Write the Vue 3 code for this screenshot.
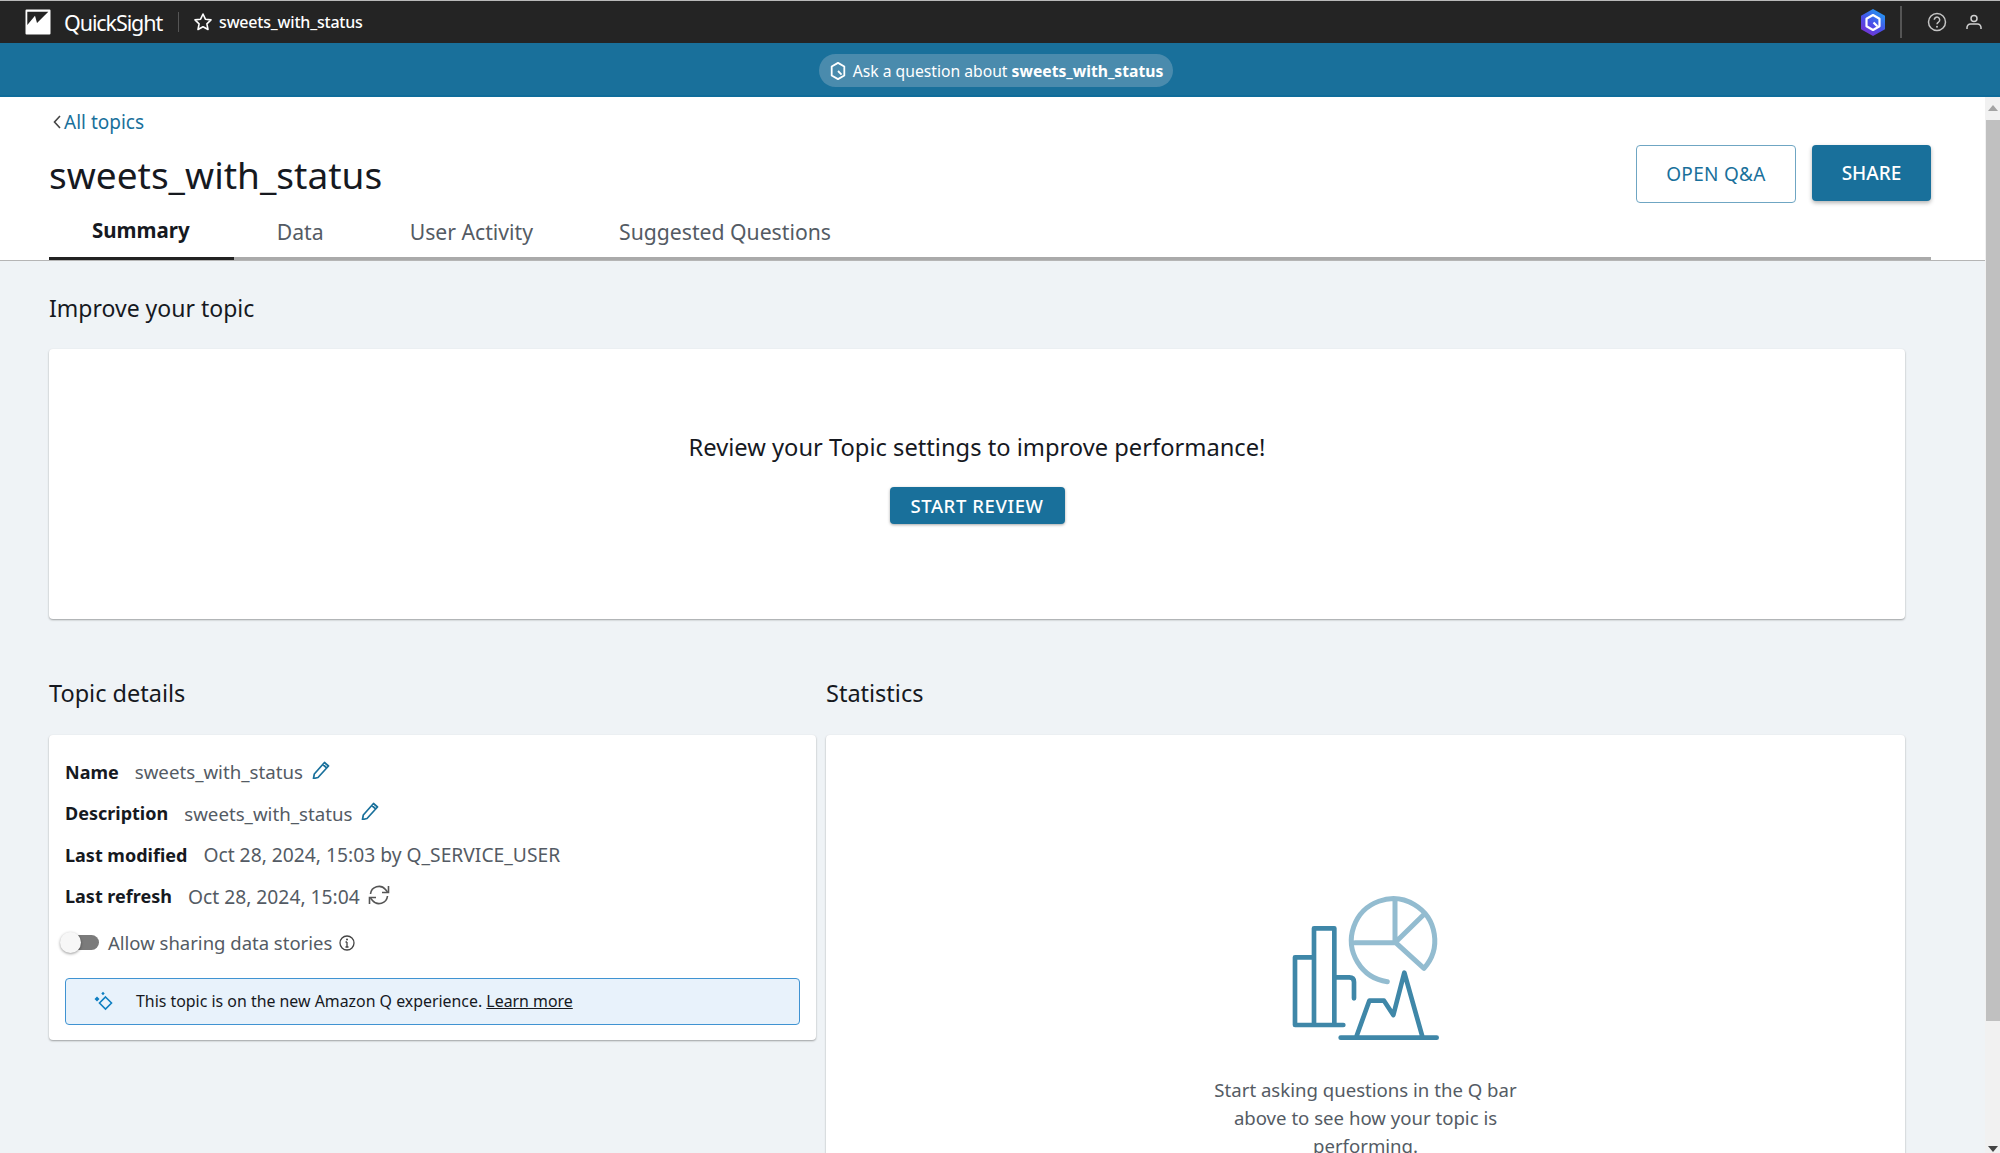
<template>
  <div class="page">
    <header class="topbar">
      <div class="brand">
        <svg class="logo" viewBox="0 0 26 26">
          <path d="M1.500 0.500h23a1 1 0 0 1 1 1v23a1 1 0 0 1-1 1h-23a1 1 0 0 1-1-1v-23a1 1 0 0 1 1-1z" fill="#fff" />
          <path d="M2.300 2.700H23.300L12 14 10 6.700 2.300 16z" fill="#232323" />
        </svg>
        <span class="brand-name">QuickSight</span>
      </div>
      <span class="bar-sep"></span>
      <svg class="star" viewBox="0 0 20 20">
        <path d="M10 2l2.400 5.200 5.600.7-4.100 3.900 1.100 5.700-5-2.800-5 2.800 1.100-5.700L2 7.900l5.600-.7z" fill="none" stroke="#fff" stroke-width="1.600" stroke-linejoin="round" />
      </svg>
      <span class="topic-name">sweets_with_status</span>
      <div class="bar-right">
        <svg class="q-logo" viewBox="0 0 24 27">
          <defs>
            <linearGradient id="qGrad" x1="0.8" y1="0" x2="0.2" y2="1">
              <stop offset="0" stop-color="#1f9df2" />
              <stop offset="0.55" stop-color="#4a4fe8" />
              <stop offset="1" stop-color="#7a2fd0" />
            </linearGradient>
          </defs>
          <path d="M12 0l12 6.700v13.600L12 27 0 20.300V6.700z" fill="url(#qGrad)" />
          <path d="M12 6l6.500 3.700v7.600L12 21l-6.500-3.700V9.700z" fill="none" stroke="#fff" stroke-width="2.200" stroke-linejoin="round" />
          <path d="M12.500 13.500l3.800 3.800" stroke="#fff" stroke-width="2.200" />
        </svg>
        <span class="right-sep"></span>
        <svg class="help" viewBox="0 0 20 20">
          <circle cx="10" cy="10" r="8.500" fill="none" stroke="#c4c4c4" stroke-width="1.500" />
          <path d="M7.300 7.800a2.700 2.700 0 1 1 4.300 2.200c-1 .7-1.600 1.100-1.600 2.200" fill="none" stroke="#c4c4c4" stroke-width="1.500" />
          <circle cx="10" cy="14.700" r="1" fill="#c4c4c4" />
        </svg>
        <svg class="person" viewBox="0 0 16 16">
          <circle cx="8" cy="4.500" r="3" fill="none" stroke="#d0d0d0" stroke-width="1.500" />
          <path d="M1 15v-1.500a3.500 3.500 0 0 1 3.500-3.500h7a3.500 3.500 0 0 1 3.500 3.500V15" fill="none" stroke="#d0d0d0" stroke-width="1.500" />
        </svg>
      </div>
    </header>

    <div class="qbar">
      <div class="ask-pill">
        <svg class="ask-icon" viewBox="0 0 20 22">
          <path d="M10 2l7 4v10l-7 4-7-4V6z" fill="none" stroke="#fff" stroke-width="2" stroke-linejoin="round" />
          <path d="M10 11l4 4" stroke="#fff" stroke-width="2" />
        </svg>
        <span>Ask a question about <b>sweets_with_status</b></span>
      </div>
    </div>

    <div class="body-wrap">
      <main class="main">
        <section class="head">
          <a class="back"><svg class="chev" viewBox="0 0 8 14"><path d="M7 1L1.500 7 7 13" fill="none" stroke="#444" stroke-width="1.600" /></svg>All topics</a>
          <div class="title-row">
            <h1>sweets_with_status</h1>
            <div class="actions">
              <button class="btn-outline">OPEN Q&amp;A</button>
              <button class="btn-solid">SHARE</button>
            </div>
          </div>
          <nav class="tabs">
            <a v-for="t in tabs" :key="t" class="tab" :class="{ active: t === 'Summary' }">{{ t }}</a>
          </nav>
        </section>

        <section class="content">
          <h2 class="improve-title">Improve your topic</h2>
          <div class="card review-card">
            <p>Review your Topic settings to improve performance!</p>
            <button class="btn-review">START REVIEW</button>
          </div>

          <div class="columns">
            <div class="col-left">
              <h2>Topic details</h2>
              <div class="card details-card">
                <div v-for="r in rows" :key="r.label" class="detail-row" :class="{ editable: r.edit }">
                  <strong>{{ r.label }}</strong>
                  <span>{{ r.value }}</span>
                  <svg v-if="r.edit" class="pencil" viewBox="0 0 18 18">
                    <path d="M12.500 1.500l4 3.500L6 16.500l-4.500 1 .8-4.500zM10.800 3.500l4 3.500" fill="none" stroke="#19709b" stroke-width="1.700" stroke-linejoin="round" />
                  </svg>
                  <svg v-if="r.refresh" class="refresh" viewBox="0 0 24 22">
                    <path d="M3.500 10a8.500 8.500 0 0 1 15-4.500L20.500 8" fill="none" stroke="#555" stroke-width="1.600" />
                    <path d="M21.500 2v6.500H15" fill="none" stroke="#555" stroke-width="1.600" />
                    <path d="M20.500 12a8.500 8.500 0 0 1-15 4.500L3.500 14" fill="none" stroke="#555" stroke-width="1.600" />
                    <path d="M2.500 20v-6.500H9" fill="none" stroke="#555" stroke-width="1.600" />
                  </svg>
                </div>
                <div class="toggle-row">
                  <span class="toggle"><i></i></span>
                  <span>Allow sharing data stories</span>
                  <svg class="info" viewBox="0 0 16 16">
                    <circle cx="8" cy="8" r="7" fill="none" stroke="#444" stroke-width="1.300" />
                    <path d="M8 7v5M6.500 12h3M6.500 7H8" fill="none" stroke="#444" stroke-width="1.300" />
                    <circle cx="8" cy="4.500" r="1" fill="#444" />
                  </svg>
                </div>
                <div class="banner">
                  <svg class="spark" viewBox="0 0 20 20">
                    <path d="M11.500 6l6 6-6 6-6-6z" fill="none" stroke="#0f7fc2" stroke-width="1.600" />
                    <path d="M3 5.500l2.500 2.500L3 10.500.5 8zM9 .8l1.700 1.700L9 4.200 7.300 2.500z" fill="#0f7fc2" />
                  </svg>
                  <span>This topic is on the new Amazon Q experience. <a>Learn more</a></span>
                </div>
              </div>
            </div>

            <div class="col-right">
              <h2>Statistics</h2>
              <div class="card stats-card">
                <svg class="illus" viewBox="0 0 660 570">
                  <g fill="none" stroke="#93bcd0" stroke-width="15" stroke-linecap="round" stroke-linejoin="round">
                    <path d="M412 335A125 125 0 1 1 522 295L437 218M315 218H437M435 90V218L520 135" />
                  </g>
                  <g fill="none" stroke="#3f87a8" stroke-width="14" stroke-linecap="round" stroke-linejoin="round">
                    <path d="M280 465H135V262H192M192 465V175H253V465M253 322H298Q312 322 312 336V385" />
                    <path d="M272 503H560M318 503L358 392H402L430 435L463 308L518 503" />
                  </g>
                </svg>
                <p>Start asking questions in the Q bar above to see how your topic is performing.</p>
              </div>
            </div>
          </div>
        </section>
      </main>

      <aside class="scrollbar">
        <span class="arrow up"></span>
        <span class="thumb"></span>
        <span class="arrow down"></span>
      </aside>
    </div>
  </div>
</template>

<script setup>
const tabs = ['Summary', 'Data', 'User Activity', 'Suggested Questions']

const rows = [
  { label: 'Name', value: 'sweets_with_status', edit: true },
  { label: 'Description', value: 'sweets_with_status', edit: true },
  { label: 'Last modified', value: 'Oct 28, 2024, 15:03 by Q_SERVICE_USER' },
  { label: 'Last refresh', value: 'Oct 28, 2024, 15:04', refresh: true }
]
</script>

<style>
html,
body {
  margin: 0;
  height: 100%;
  overflow: hidden;
}
</style>

<style scoped>
.page {
  display: flex;
  flex-direction: column;
  height: 1153px;
  overflow: hidden;
  font-family: "Noto Sans", sans-serif;
  color: #16191f;
  background: #eff3f6;
}

.topbar {
  display: flex;
  align-items: center;
  flex: 0 0 42px;
  padding-left: 25px;
  background: #242424;
  border-top: 1px solid #b9b9b9;
  color: #fff;
}

.brand {
  display: flex;
  align-items: center;
}

.logo {
  width: 26px;
  height: 26px;
}

.brand-name {
  margin-left: 13px;
  font-size: 21.500px;
  letter-spacing: -1.100px;
}

.bar-sep {
  width: 1px;
  height: 20px;
  margin: 0 14px 0 16px;
  background: #555;
}

.star {
  width: 20px;
  height: 20px;
}

.topic-name {
  margin-left: 6px;
  font-size: 16px;
  font-weight: 500;
  letter-spacing: -0.200px;
}

.bar-right {
  display: flex;
  align-items: center;
  margin-left: auto;
  padding-right: 18px;
}

.q-logo {
  width: 24px;
  height: 27px;
}

.right-sep {
  width: 2px;
  height: 32px;
  margin: 0 25px 0 15px;
  background: #555;
}

.help {
  width: 20px;
  height: 20px;
}

.person {
  width: 16px;
  height: 16px;
  margin-left: 19px;
}

.qbar {
  display: flex;
  align-items: center;
  justify-content: center;
  flex: 0 0 54px;
  box-sizing: border-box;
  background: #19709b;
  border-bottom: 2px solid #0f6c9a;
}

.ask-pill {
  display: flex;
  align-items: center;
  height: 33px;
  margin: 3px 8px 0 0;
  padding: 0 10px;
  border-radius: 17px;
  background: #4a8bad;
  color: #fff;
  font-size: 15.700px;
}

.ask-icon {
  width: 18px;
  height: 20px;
  margin-right: 6px;
}

.ask-pill b {
  font-weight: 700;
}

.body-wrap {
  display: flex;
  flex: 1;
  min-height: 0;
}

.main {
  flex: 1;
  min-width: 0;
  overflow: hidden;
}

.head {
  padding: 12px 0 0 49px;
  background: #fff;
  border-bottom: 1px solid #b5b5b5;
}

.back {
  display: flex;
  align-items: center;
  height: 25px;
  padding-left: 4px;
  color: #19709b;
  font-size: 19px;
}

.chev {
  width: 8px;
  height: 14px;
  margin-right: 3px;
}

.title-row {
  display: flex;
  align-items: flex-start;
  justify-content: space-between;
  margin-top: -1px;
  padding-right: 54px;
}

h1 {
  margin: 17px 0 0;
  font-size: 37px;
  font-weight: 400;
  line-height: 50px;
}

.actions {
  display: flex;
  align-items: flex-start;
  gap: 16px;
  margin-top: 12px;
}

button {
  font-family: inherit;
  cursor: pointer;
}

.btn-outline {
  width: 160px;
  height: 58px;
  border: 1px solid #6fa6c3;
  border-radius: 4px;
  background: #fff;
  color: #19709b;
  font-size: 19px;
  letter-spacing: 0.300px;
}

.btn-solid {
  width: 119px;
  height: 56px;
  border: none;
  border-radius: 4px;
  background: #19709b;
  color: #fff;
  font-size: 19px;
  font-weight: 500;
  box-shadow: 0 2px 4px rgba(0, 0, 0, 0.3);
}

.tabs {
  display: flex;
  margin-right: 54px;
  border-bottom: 3px solid #aaa;
}

.tab {
  display: flex;
  align-items: center;
  justify-content: center;
  box-sizing: border-box;
  height: 57px;
  margin-bottom: -3px;
  padding: 0 43px 1px;
  color: #545b64;
  font-size: 21.200px;
}

.tab.active {
  color: #16191f;
  font-size: 20.500px;
  font-weight: 700;
  border-bottom: 3px solid #222;
  padding: 0 44px 0 43px;
}

.content {
  padding: 0 80px 0 49px;
}

h2 {
  margin: 0;
  font-size: 23.500px;
  font-weight: 400;
  line-height: 32px;
}

.improve-title {
  margin-top: 31px;
  font-size: 23px;
}

.card {
  border-radius: 4px;
  background: #fff;
  box-shadow: 0 1px 2px rgba(0, 0, 0, 0.35);
}

.review-card {
  display: flex;
  flex-direction: column;
  align-items: center;
  box-sizing: border-box;
  height: 270px;
  margin-top: 25px;
  padding-top: 81px;
}

.review-card p {
  margin: 0;
  font-size: 23.700px;
  line-height: 34px;
}

.btn-review {
  width: 175px;
  height: 37px;
  margin-top: 23px;
  border: none;
  border-radius: 4px;
  background: #19709b;
  color: #fff;
  font-size: 18.500px;
  font-weight: 500;
  letter-spacing: 0.600px;
  box-shadow: 0 1px 3px rgba(0, 0, 0, 0.35);
}

.columns {
  display: flex;
  gap: 10px;
  margin-top: 58px;
}

.columns h2 {
  margin-bottom: 26px;
}

.col-left {
  flex: 0 0 767px;
}

.col-right {
  flex: 1;
  min-width: 0;
}

.details-card {
  box-sizing: border-box;
  height: 305px;
  padding: 16px 16px 0;
}

.detail-row {
  display: flex;
  align-items: center;
  gap: 16px;
  height: 41.500px;
  color: #545b64;
  font-size: 19.250px;
}

.detail-row.editable {
  font-size: 18.700px;
}

.detail-row strong {
  color: #16191f;
  font-size: 18px;
  font-weight: 700;
}

.pencil {
  width: 18px;
  height: 18px;
  margin: -4px 0 0 -7px;
}

.refresh {
  width: 24px;
  height: 22px;
  margin: -2px 0 0 -9px;
}

.toggle-row {
  display: flex;
  align-items: center;
  height: 32px;
  margin: 9px 0 0 -5px;
  color: #545b64;
  font-size: 18.500px;
}

.toggle {
  position: relative;
  display: block;
  width: 39px;
  height: 15px;
  margin-right: 9px;
}

.toggle::before {
  content: "";
  position: absolute;
  top: 0;
  right: 0;
  width: 29px;
  height: 15px;
  border-radius: 8px;
  background: #7b7b7b;
}

.toggle i {
  position: absolute;
  top: -3px;
  left: 0;
  width: 21px;
  height: 21px;
  border-radius: 50%;
  background: #f7f7f7;
  box-shadow: 0 1px 3px rgba(0, 0, 0, 0.4);
}

.info {
  width: 16px;
  height: 16px;
  margin: 2px 0 0 7px;
}

.banner {
  display: flex;
  align-items: center;
  box-sizing: border-box;
  height: 47px;
  margin-top: 20px;
  padding: 0 0 2px 28px;
  border: 1px solid #3f93d2;
  border-radius: 4px;
  background: #e8f2fb;
  font-size: 15.900px;
}

.spark {
  width: 20px;
  height: 20px;
  margin-right: 22px;
}

.banner a {
  text-decoration: underline;
}

.stats-card {
  display: flex;
  flex-direction: column;
  align-items: center;
  height: 600px;
  padding-top: 135px;
  box-sizing: border-box;
}

.illus {
  width: 220px;
  height: 190px;
  margin-left: -11px;
}

.stats-card p {
  width: 340px;
  margin: 16px 0 0;
  color: #545b64;
  font-size: 18.600px;
  line-height: 28px;
  text-align: center;
}

.scrollbar {
  position: relative;
  flex: 0 0 15px;
  display: flex;
  flex-direction: column;
  align-items: stretch;
  background: #f1f1f1;
}

.thumb {
  height: 901px;
  margin: 0 0 0 1px;
  background: #c0c0c0;
}

.arrow {
  display: block;
  flex: 0 0 23px;
  position: relative;
}

.arrow::after {
  content: "";
  position: absolute;
  left: 3px;
  border-left: 5px solid transparent;
  border-right: 5px solid transparent;
}

.arrow.up::after {
  top: 8px;
  border-bottom: 6px solid #a3a3a3;
}

.arrow.down {
  margin-top: auto;
}

.arrow.down::after {
  bottom: 1px;
  border-top: 6px solid #444;
}
</style>
